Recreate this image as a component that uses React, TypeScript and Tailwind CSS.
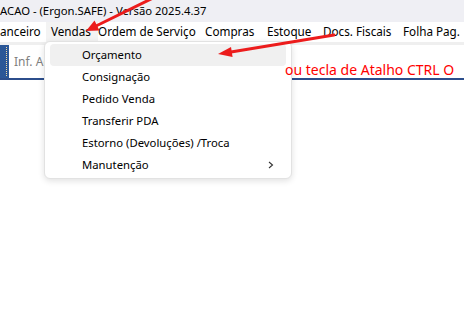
import React from "react";

const menuItems = [
  { label: "anceiro", w: "w-[51px]", pl: "pl-0" },
  { label: "Vendas", w: "w-[52px]", pl: "pl-[5px]", active: true },
  { label: "Ordem de Serviço", w: "w-[107px]", pl: "pl-0" },
  { label: "Compras", w: "w-[62px]", pl: "pl-0" },
  { label: "Estoque", w: "w-[56px]", pl: "pl-0" },
  { label: "Docs. Fiscais", w: "w-[80px]", pl: "pl-0" },
  { label: "Folha Pag.", w: "w-[70px]", pl: "pl-0" },
];

const vendasItems = [
  "Orçamento",
  "Consignação",
  "Pedido Venda",
  "Transferir PDA",
  "Estorno (Devoluções) /Troca",
  "Manutenção",
];

export default function App() {
  return (
    <div className="relative w-[464px] h-[317px] overflow-hidden bg-white font-['Noto_Sans','Open_Sans',sans-serif] text-black">
      {/* title bar */}
      <div className="h-[22px] bg-[#efeff4] flex items-center text-[11.3px] leading-none whitespace-nowrap">
        ACAO - (Ergon.SAFE) - Versão 2025.4.37
      </div>

      {/* menu bar */}
      <div className="h-[20px] flex items-stretch text-[11.7px] whitespace-nowrap">
        {menuItems.map((m) => (
          <div
            key={m.label}
            className={`${m.w} shrink-0 flex items-center ${m.active ? "bg-[#f3f3f3] -ml-[5px]" : ""} ${m.pl}`}
          >
            {m.label}
          </div>
        ))}
      </div>

      <div className="h-[3px] bg-[#efefef]" />

      {/* toolbar */}
      <div className="h-[35px] flex items-stretch border-b-2 border-[#2c4e8c]">
        <div className="w-[9px] bg-[#2b5797] flex justify-end py-[2px] pr-[2px]">
          <div className="w-[2px] border-r border-dotted border-[#f4d9a0]" />
        </div>
        <div className="flex items-center pl-[5px] text-[12px] text-[#808080] whitespace-nowrap">
          Inf. Acesso
        </div>
      </div>

      {/* shortcut hint */}
      <div className="absolute left-[285px] top-[61px] z-20 text-[14px] leading-[18px] text-[#ff0000] whitespace-nowrap">
        ou tecla de Atalho CTRL O
      </div>

      {/* dropdown */}
      <div className="absolute left-[44px] top-[41px] z-10 w-[248px] rounded-[6px] border border-[#e2e2e2] bg-white pt-[2px] pb-[2px] shadow-[0_2px_6px_rgba(0,0,0,0.12)] text-[11.3px]">
        {vendasItems.map((item, i) => (
          <div
            key={item}
            className={`mx-[5px] h-[22px] rounded-[4px] flex items-center pl-[32px] pr-[10px] ${i === 0 ? "bg-[#f0f0f0]" : ""}`}
          >
            <span className="flex-1 whitespace-nowrap">{item}</span>
            {item === "Manutenção" && (
              <svg width="6" height="8" viewBox="0 0 6 8" className="mr-[2px]">
                <path d="M1 1 L4.5 4 L1 7" fill="none" stroke="#333" strokeWidth="1.1" />
              </svg>
            )}
          </div>
        ))}
      </div>

      {/* annotation arrows */}
      <svg className="absolute inset-0 z-30 pointer-events-none" width="464" height="317">
        <line x1="153" y1="-2" x2="96" y2="26" stroke="#ec1c1c" strokeWidth="3" strokeLinecap="round" />
        <polygon points="86,31 99.5,30.5 94.5,20.5" fill="#ec1c1c" />
        <line x1="334" y1="35" x2="231" y2="52" stroke="#ec1c1c" strokeWidth="3" strokeLinecap="round" />
        <polygon points="218,54 232.6,57 231,47" fill="#ec1c1c" />
      </svg>
    </div>
  );
}
